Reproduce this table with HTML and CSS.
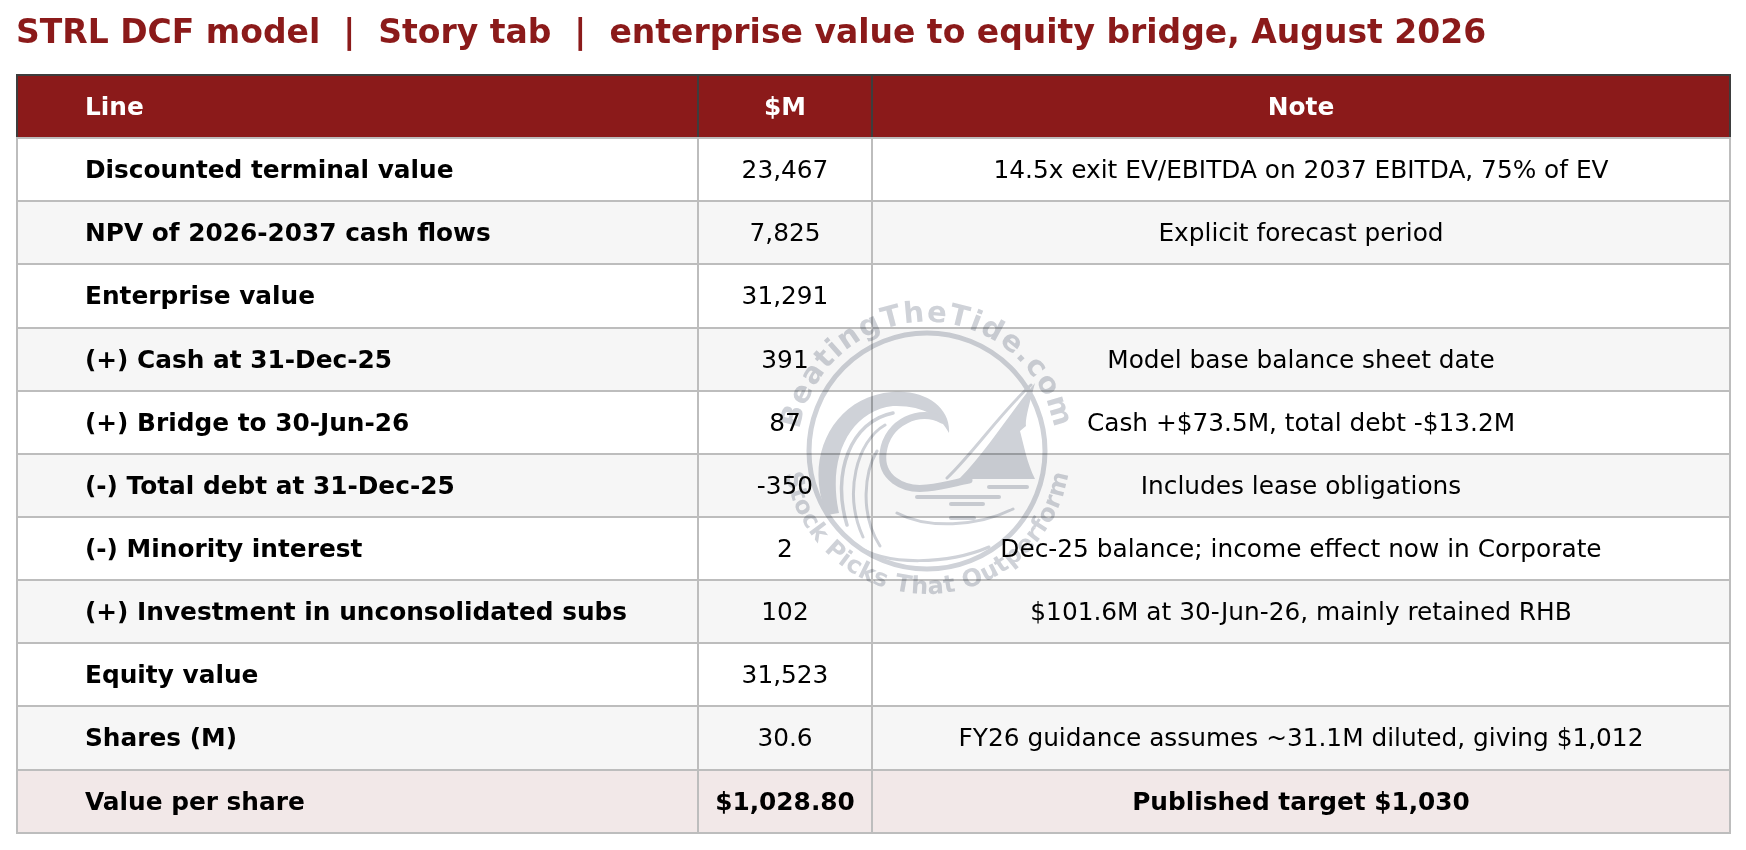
FILE: index.html
```html
<!DOCTYPE html>
<html>
<head>
<meta charset="utf-8">
<link rel="stylesheet" href="styles.css">
</head>
<body>
<h1 class="title">STRL DCF model&nbsp; |&nbsp; Story tab&nbsp; |&nbsp; enterprise value to equity bridge, August 2026</h1>
<div class="table-wrap">
  <table class="bridge">
    <colgroup>
      <col class="c-line">
      <col class="c-val">
      <col class="c-note">
    </colgroup>
    <thead>
      <tr><th class="line">Line</th><th>$M</th><th>Note</th></tr>
    </thead>
    <tbody>
      <tr><td class="line">Discounted terminal value</td><td>23,467</td><td>14.5x exit EV/EBITDA on 2037 EBITDA, 75% of EV</td></tr>
      <tr class="alt"><td class="line">NPV of 2026-2037 cash flows</td><td>7,825</td><td>Explicit forecast period</td></tr>
      <tr><td class="line">Enterprise value</td><td>31,291</td><td></td></tr>
      <tr class="alt"><td class="line">(+) Cash at 31-Dec-25</td><td>391</td><td>Model base balance sheet date</td></tr>
      <tr><td class="line">(+) Bridge to 30-Jun-26</td><td>87</td><td>Cash +$73.5M, total debt -$13.2M</td></tr>
      <tr class="alt"><td class="line">(-) Total debt at 31-Dec-25</td><td>-350</td><td>Includes lease obligations</td></tr>
      <tr><td class="line">(-) Minority interest</td><td>2</td><td>Dec-25 balance; income effect now in Corporate</td></tr>
      <tr class="alt"><td class="line">(+) Investment in unconsolidated subs</td><td>102</td><td>$101.6M at 30-Jun-26, mainly retained RHB</td></tr>
      <tr><td class="line">Equity value</td><td>31,523</td><td></td></tr>
      <tr class="alt"><td class="line">Shares (M)</td><td>30.6</td><td>FY26 guidance assumes ~31.1M diluted, giving $1,012</td></tr>
      <tr class="total"><td class="line">Value per share</td><td>$1,028.80</td><td>Published target $1,030</td></tr>
    </tbody>
  </table>
  <svg class="watermark" width="340" height="340" viewBox="-170 -170 340 340" xmlns="http://www.w3.org/2000/svg">
    <defs>
      <path id="arcTop" d="M-127.6,21 A129.3,129.3 0 1,1 127.6,21"/>
      <path id="arcBot" d="M-134.4,-48.9 A143,143 0 1,0 134.4,-48.9"/>
    </defs>
    <g class="wm-shape">
      <circle cx="0" cy="0" r="118" fill="none" stroke-width="5"/>
      <path d="M-100,64 C-124,10 -96,-54 -35,-59 C0,-62 24,-42 22,-18 C14,-34 -4,-46 -34,-45 C-78,-40 -100,8 -88,62 Z" stroke="none"/>
      <g fill="none" stroke-linecap="round">
        <path d="M15,-31 C-6,-43 -40,-30 -44,2 C-47,26 -25,40 0,37 C20,35 30,31 42,29" stroke-width="7"/>
        <path d="M-80,74 C-96,22 -76,-30 -34,-38" stroke-width="3.5"/>
        <path d="M-64,86 C-84,42 -70,-10 -42,-26" stroke-width="3"/>
        <path d="M-47,95 C-68,62 -62,20 -50,0" stroke-width="3"/>
        <path d="M-72,94 C-40,116 22,113 62,96" stroke-width="3"/>
        <path d="M-30,62 C0,78 50,76 86,58" stroke-width="3"/>
        <path d="M20,27 C48,0 75,-40 104,-66" stroke-width="3"/>
        <path d="M-10,46 L72,46" stroke-width="4"/>
        <path d="M24,53 L56,53" stroke-width="4"/>
        <path d="M24,67 L47,67" stroke-width="4"/>
        <path d="M62,36 L100,36" stroke-width="4"/>
      </g>
      <path d="M32,28 C60,0 84,-40 108,-68 C102,-46 98,-31 99,-25 L93,-20 C97,-5 100,12 108,28 Z" stroke="none"/>
    </g>
    <text class="wm-top"><textPath href="#arcTop" startOffset="50%" text-anchor="middle">BeatingTheTide.com</textPath></text>
    <text class="wm-bot"><textPath href="#arcBot" startOffset="50%" text-anchor="middle">Stock Picks That Outperform</textPath></text>
  </svg>
</div>
</body>
</html>
```
FILE: styles.css
```css
html, body {
  margin: 0;
  padding: 0;
  background: #ffffff;
}
body {
  font-family: "DejaVu Sans", Verdana, sans-serif;
  padding: 0 17px 0 16px;
}
.title {
  margin: 0;
  padding-top: 12px;
  height: 74px;
  box-sizing: border-box;
  font-size: 33px;
  line-height: 40px;
  font-weight: bold;
  color: #8b1a1a;
  white-space: nowrap;
}
.table-wrap {
  position: relative;
  width: 1713px;
}
.bridge {
  width: 1713px;
  border-collapse: collapse;
  table-layout: fixed;
  font-size: 24.8px;
}
.c-line { width: 681px; }
.c-val { width: 174px; }
.c-note { width: 858px; }
.bridge th,
.bridge td {
  height: 63.15px;
  padding: 0;
  text-align: center;
  vertical-align: middle;
  border: 2px solid #bdbdbd;
  box-sizing: border-box;
  white-space: nowrap;
}
.bridge th {
  background: #8b1a1a;
  color: #ffffff;
  font-weight: bold;
  border-color: #3d3d3d;
  border-bottom-color: #bdbdbd;
}
.bridge td {
  color: #000000;
  background: #ffffff;
}
.bridge .line {
  text-align: left;
  padding-left: 67px;
  font-weight: bold;
}
.bridge tr.alt td {
  background: #f6f6f6;
}
.bridge tr.total td {
  background: #f2e8e8;
  font-weight: bold;
}
.watermark {
  position: absolute;
  left: 741px;
  top: 207px;
  mix-blend-mode: multiply;
  pointer-events: none;
}
.wm-shape {
  fill: #cfd2d8;
  stroke: #cfd2d8;
}
.wm-top {
  font-family: "DejaVu Sans", sans-serif;
  font-weight: bold;
  font-size: 29px;
  letter-spacing: 1.5px;
  fill: #cfd2d8;
}
.wm-bot {
  font-family: "DejaVu Sans", sans-serif;
  font-weight: bold;
  font-size: 24px;
  letter-spacing: 0.5px;
  fill: #cfd2d8;
}
```
